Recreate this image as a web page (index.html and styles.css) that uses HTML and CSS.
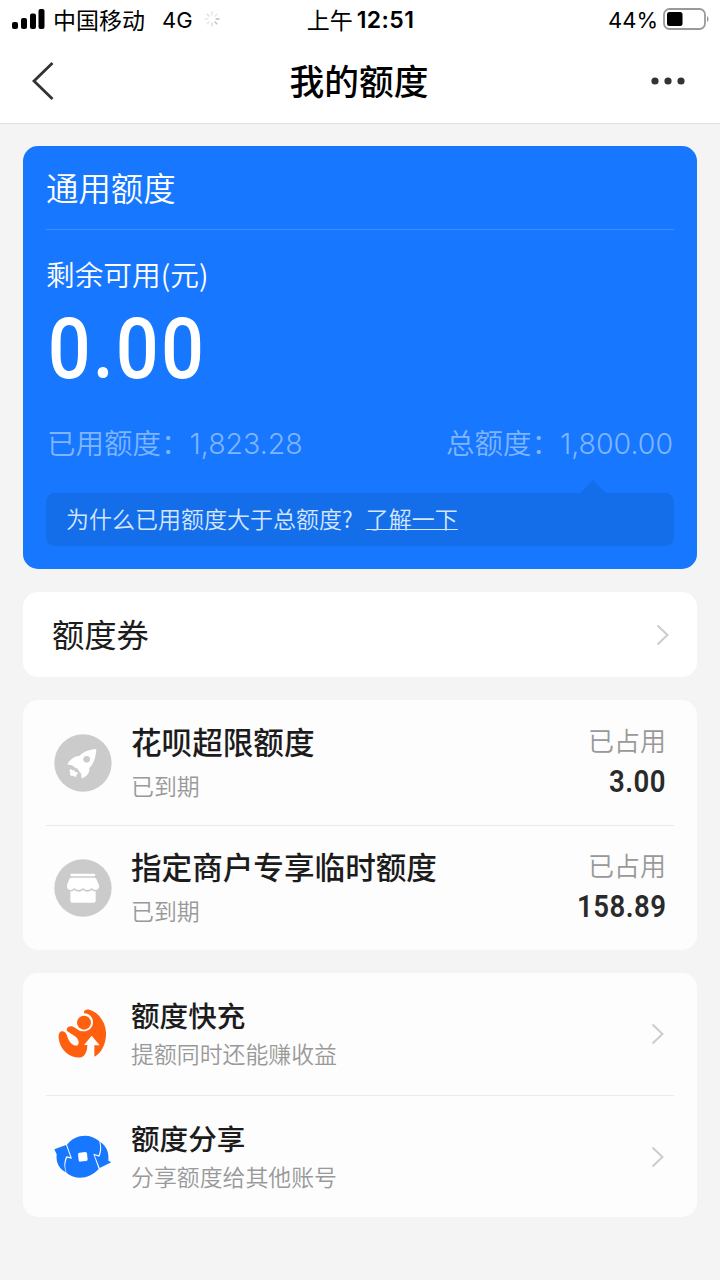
FILE: index.html
```html
<!DOCTYPE html>
<html lang="zh-CN">
  <head>
    <meta charset="UTF-8" />
    <meta name="viewport" content="width=device-width, initial-scale=1.0" />
    <title>我的额度</title>
    <link rel="stylesheet" href="styles.css" />
  </head>
  <body>
    <header class="header">
      <div class="status-bar">
        <div class="status-left">
          <svg class="signal" width="33" height="21" viewBox="0 0 33 21">
            <rect x="0" y="13" width="6" height="7" rx="2" />
            <rect x="9" y="9" width="6" height="11" rx="2" />
            <rect x="18" y="4.5" width="6" height="15.5" rx="2" />
            <rect x="26.500" y="0" width="6" height="20" rx="2" />
          </svg>
          <span class="carrier">中国移动</span>
          <span class="network">4G</span>
          <svg class="spinner" width="16" height="16" viewBox="0 0 16 16">
            <path d="M8 0.500v4" stroke="#e4e4e4" />
            <path d="M13.300 2.700l-2.800 2.800" stroke="#e8e8e8" />
            <path d="M15.500 8h-4" stroke="#bbb" />
            <path d="M13.300 13.300l-2.800-2.800" stroke="#c4c4c4" />
            <path d="M8 15.500v-4" stroke="#ddd" />
            <path d="M2.700 13.300l2.800-2.800" stroke="#e8e8e8" />
            <path d="M0.500 8h4" stroke="#e8e8e8" />
            <path d="M2.700 2.700l2.800 2.800" stroke="#e0e0e0" />
          </svg>
        </div>
        <div class="status-time"><span>上午</span><b>12:51</b></div>
        <div class="status-right">
          <span class="percent">44%</span>
          <svg class="battery" width="46" height="22" viewBox="0 0 46 22">
            <rect x="1" y="1" width="41" height="20" rx="5.500" fill="#fff" stroke="#999" stroke-width="1.800" />
            <rect x="4" y="4" width="15.500" height="14" rx="2.500" />
            <path d="M44 8c2 1 2 5 0 6z" fill="#999" />
          </svg>
        </div>
      </div>
      <div class="nav-bar">
        <svg class="back" width="22" height="38" viewBox="0 0 22 38">
          <path d="M20.500 1L2 19l18.500 18" fill="none" stroke="#333" stroke-width="2.800" />
        </svg>
        <h1>我的额度</h1>
        <svg class="more" width="34" height="8" viewBox="0 0 34 8">
          <circle cx="4" cy="4" r="3.600" />
          <circle cx="17" cy="4" r="3.600" />
          <circle cx="30" cy="4" r="3.600" />
        </svg>
      </div>
    </header>

    <main>
      <section class="quota-card">
        <h2>通用额度</h2>
        <div class="quota-label">剩余可用(元)</div>
        <div class="quota-amount">0.00</div>
        <div class="quota-detail">
          <div>已用额度：<span class="num">1,823.28</span></div>
          <div>总额度：<span class="num">1,800.00</span></div>
        </div>
        <div class="tip">为什么已用额度大于总额度?<a href="#">了解一下</a></div>
      </section>

      <section class="card coupon">
        <span>额度券</span>
        <svg class="arrow" width="13" height="22" viewBox="0 0 13 22">
          <path d="M1.500 1.500L11.500 11l-10 9.500" />
        </svg>
      </section>

      <section class="card list">
        <div class="row">
          <svg class="icon" width="58" height="58" viewBox="41 41 174 174">
            <circle cx="128" cy="128" r="86" fill="#cbcbcb" />
            <path
              d="M168 86C150 87 130 93 117 107C104 105 88 118 81 132C86 134 94 134 98 137L105 142L112 145L117 154L121 157C124 162 122 170 124 174C136 170 149 160 147 143C161 130 167 108 168 86Z"
              fill="#fff"
            />
            <circle cx="139" cy="117" r="10" fill="#cbcbcb" />
            <path
              d="M91 146C87 149 86 153 90 156C88 160 89 166 94 167C98 165 101 166 104 170C107 171 109 167 108 163C113 162 114 158 110 155C105 156 102 153 102 149C99 151 94 150 91 146Z"
              fill="#fff"
            />
          </svg>
          <div class="info">
            <h3>花呗超限额度</h3>
            <p>已到期</p>
          </div>
          <div class="used">
            <p>已占用</p>
            <strong>3.00</strong>
          </div>
        </div>
        <div class="row">
          <svg class="icon" width="58" height="58" viewBox="41 40 174 174">
            <circle cx="128" cy="127" r="86" fill="#cbcbcb" />
            <rect x="90" y="84" width="75" height="8" rx="4" fill="#fff" />
            <path
              d="M93 96H162Q166 96 168 100L176 119Q178 132 166 133Q159 133 154 127Q149 133 141 133Q133 133 128 127Q123 133 115 133Q107 133 102 127Q97 133 90 133Q78 132 80 119L87 100Q89 96 93 96Z"
              fill="#fff"
            />
            <path
              d="M90 137Q97 138 102 133Q108 138 115 138Q122 138 128 133Q134 138 141 138Q148 138 154 133Q159 138 166 137V166Q166 171 160 171H96Q90 171 90 166Z"
              fill="#fff"
            />
          </svg>
          <div class="info">
            <h3>指定商户专享临时额度</h3>
            <p>已到期</p>
          </div>
          <div class="used">
            <p>已占用</p>
            <strong>158.89</strong>
          </div>
        </div>
      </section>

      <section class="card list services">
        <div class="row">
          <svg class="icon" width="58" height="58" viewBox="41 32 174 174">
            <g fill="#ff6010">
              <circle cx="131" cy="85" r="21" />
              <path
                d="M131 52C134 44 146 44 158 51C180 62 195 86 197 113C199 145 184 176 162 187V153H178L154 124L131 152H141C141 168 136 184 123 189C95 193 67 174 58 145C53 130 53 113 64 111C75 111 79 119 82 130C88 145 98 154 109 154C118 150 116 138 109 130C99 120 84 116 79 108C78 98 89 94 98 97C109 101 114 111 130 111C146 111 158 99 158 83C158 67 145 57 131 57Z"
              />
            </g>
          </svg>
          <div class="info">
            <h3>额度快充</h3>
            <p>提额同时还能赚收益</p>
          </div>
          <svg class="arrow" width="13" height="22" viewBox="0 0 13 22">
            <path d="M1.500 1.500L11.500 11l-10 9.500" />
          </svg>
        </div>
        <div class="row">
          <svg class="icon" width="58" height="58" viewBox="41 24 174 174">
            <g fill="#1777ff">
              <path d="M42 88L77 75L90 111L78 109C70 126 71 142 77 157C58 148 46 130 49 103Z" />
              <path d="M180 66C198 77 207 99 204 122L213 127L178 144L163 106L177 110C184 96 184 80 180 66Z" />
              <path
                d="M80 74C104 42 150 38 177 64C180 78 181 92 175 106L159 101L175 147C148 178 105 181 79 159C73 143 73 129 80 113L95 116Z"
              />
            </g>
            <rect x="114" y="97" width="27" height="27" rx="5" fill="#fff" transform="rotate(-6 128 110)" />
          </svg>
          <div class="info">
            <h3>额度分享</h3>
            <p>分享额度给其他账号</p>
          </div>
          <svg class="arrow" width="13" height="22" viewBox="0 0 13 22">
            <path d="M1.500 1.500L11.500 11l-10 9.500" />
          </svg>
        </div>
      </section>
    </main>
  </body>
</html>
```
FILE: styles.css
```css
* {
  box-sizing: border-box;
  margin: 0;
  padding: 0;
}
body {
  min-height: 1280px;
  background-color: #f4f4f4;
  color: #1c1c1c;
  font-family: "Noto Sans CJK SC", sans-serif;
  white-space: nowrap;
}
svg {
  display: block;
  flex-shrink: 0;
}

/* header */
.header {
  height: 124px;
  background-color: #fff;
  border-bottom: 1px solid #e0e0e0;
}
.status-bar {
  display: grid;
  grid-template-columns: 1fr auto 1fr;
  height: 38px;
  padding: 0 11px 0 12px;
  font-size: 23px;
  line-height: 36px;
  color: #000;
}
.status-left,
.status-time,
.status-right {
  display: flex;
  align-items: center;
}
.status-right {
  justify-content: flex-end;
}
.carrier {
  margin-left: 8px;
}
.network,
.percent,
.status-time b {
  font-family: Inter, sans-serif;
  padding-top: 1px;
}
.network {
  margin-left: 17px;
  font-size: 22px;
}
.spinner {
  margin-left: 11px;
  fill: none;
  stroke-width: 1.5;
}
.status-time b {
  margin-left: 4px;
  font-size: 23px;
  font-weight: 600;
  letter-spacing: 0.4px;
}
.percent {
  margin-right: 5px;
  font-size: 22px;
}
.nav-bar {
  display: flex;
  align-items: center;
  justify-content: space-between;
  height: 85px;
  padding: 0 35px 0 32px;
}
.nav-bar h1 {
  margin-left: 13px;
  font-size: 34.7px;
  font-weight: 500;
  line-height: 80px;
  padding-bottom: 2px;
  color: #000;
}
.more {
  fill: #333;
}

/* blue card */
main {
  display: flex;
  flex-direction: column;
  gap: 23px;
  padding: 22px 23px;
}
.quota-card {
  height: 423px;
  padding: 0 23px;
  border-radius: 15px;
  background-color: #1777ff;
  color: #fff;
}
.quota-card h2 {
  height: 84px;
  border-bottom: 1px solid #3f8fff;
  font-size: 32.4px;
  font-weight: 350;
  line-height: 81px;
}
.quota-label {
  margin-top: 23px;
  font-size: 28.7px;
  font-weight: 350;
  line-height: 42px;
}
.quota-amount {
  margin-top: 14px;
  padding-left: 2px;
  font-family: Roboto, sans-serif;
  font-size: 86px;
  font-weight: 500;
  letter-spacing: 2.3px;
  line-height: 80px;
  transform: scaleX(0.88);
  transform-origin: left;
}
.quota-detail {
  display: flex;
  justify-content: space-between;
  margin-top: 33px;
  padding: 0 1px;
  font-size: 28.5px;
  font-weight: 350;
  line-height: 40px;
  color: #80b5ff;
}
.num {
  font-family: Inter, sans-serif;
  font-size: 28.5px;
}
.tip {
  position: relative;
  height: 53px;
  margin-top: 29px;
  padding-left: 20px;
  border-radius: 9px;
  background-color: #146eea;
  font-size: 23px;
  font-weight: 350;
  line-height: 51px;
  color: #d5e6ff;
}
.tip::before {
  content: "";
  position: absolute;
  top: -13px;
  right: 68px;
  border: 13px solid transparent;
  border-top: 0;
  border-bottom-color: #146eea;
}
.tip a {
  margin-left: 13px;
  color: inherit;
  text-decoration-thickness: 1px;
  text-underline-offset: 1px;
}

/* white cards */
.card {
  border-radius: 15px;
  background-color: #fdfdfd;
}
.coupon {
  display: flex;
  align-items: center;
  justify-content: space-between;
  height: 85px;
  padding: 0 28px 0 29px;
  background-color: #fff;
  font-size: 32.3px;
  line-height: 80px;
}
.coupon span {
  padding-bottom: 3px;
}
.arrow {
  fill: none;
  stroke: #ccc;
  stroke-width: 2;
}
.list {
  padding: 0 23px;
}
.row {
  display: flex;
  align-items: center;
  height: 125px;
  padding: 0 8px;
}
.row + .row {
  border-top: 1px solid #ebebeb;
}
.info {
  flex: 1;
  margin-left: 19px;
}
.info h3 {
  font-size: 30.6px;
  font-weight: 500;
  line-height: 44px;
}
.info p {
  font-size: 22.9px;
  font-weight: 350;
  line-height: 44px;
  color: #999;
}
.used {
  padding-bottom: 4px;
  text-align: right;
}
.used p {
  font-size: 26px;
  font-weight: 350;
  line-height: 42px;
  color: #999;
}
.used strong {
  display: block;
  font-family: Roboto, sans-serif;
  font-size: 31px;
  font-weight: 600;
  line-height: 42px;
  letter-spacing: 0.5px;
  color: #2a2a2a;
  transform: scaleX(0.89);
  transform-origin: right;
}
.services .row {
  height: 122px;
  padding-right: 10px;
}
.services .info h3 {
  font-size: 28.6px;
  line-height: 38px;
}
.services .info p {
  line-height: 38px;
}
```
